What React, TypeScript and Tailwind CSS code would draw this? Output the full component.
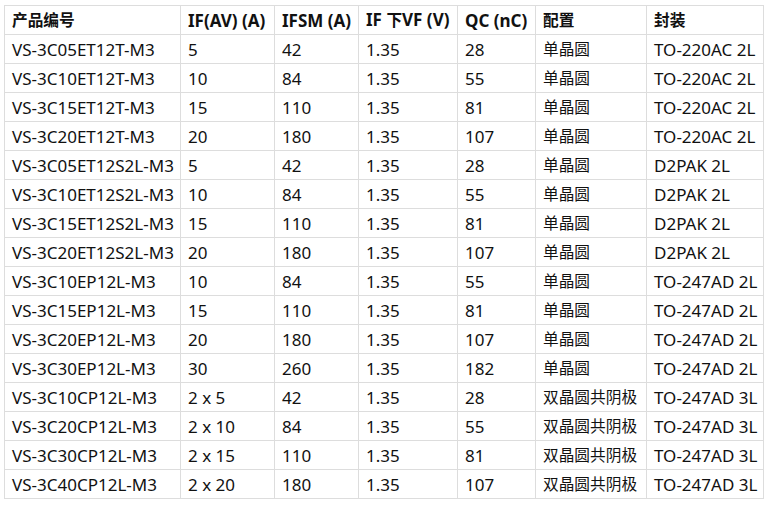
import React from 'react';

const rows: string[][] = [
  ['VS-3C05ET12T-M3', '5', '42', '1.35', '28', '单晶圆', 'TO-220AC 2L'],
  ['VS-3C10ET12T-M3', '10', '84', '1.35', '55', '单晶圆', 'TO-220AC 2L'],
  ['VS-3C15ET12T-M3', '15', '110', '1.35', '81', '单晶圆', 'TO-220AC 2L'],
  ['VS-3C20ET12T-M3', '20', '180', '1.35', '107', '单晶圆', 'TO-220AC 2L'],
  ['VS-3C05ET12S2L-M3', '5', '42', '1.35', '28', '单晶圆', 'D2PAK 2L'],
  ['VS-3C10ET12S2L-M3', '10', '84', '1.35', '55', '单晶圆', 'D2PAK 2L'],
  ['VS-3C15ET12S2L-M3', '15', '110', '1.35', '81', '单晶圆', 'D2PAK 2L'],
  ['VS-3C20ET12S2L-M3', '20', '180', '1.35', '107', '单晶圆', 'D2PAK 2L'],
  ['VS-3C10EP12L-M3', '10', '84', '1.35', '55', '单晶圆', 'TO-247AD 2L'],
  ['VS-3C15EP12L-M3', '15', '110', '1.35', '81', '单晶圆', 'TO-247AD 2L'],
  ['VS-3C20EP12L-M3', '20', '180', '1.35', '107', '单晶圆', 'TO-247AD 2L'],
  ['VS-3C30EP12L-M3', '30', '260', '1.35', '182', '单晶圆', 'TO-247AD 2L'],
  ['VS-3C10CP12L-M3', '2 x 5', '42', '1.35', '28', '双晶圆共阴极', 'TO-247AD 3L'],
  ['VS-3C20CP12L-M3', '2 x 10', '84', '1.35', '55', '双晶圆共阴极', 'TO-247AD 3L'],
  ['VS-3C30CP12L-M3', '2 x 15', '110', '1.35', '81', '双晶圆共阴极', 'TO-247AD 3L'],
  ['VS-3C40CP12L-M3', '2 x 20', '180', '1.35', '107', '双晶圆共阴极', 'TO-247AD 3L'],
];

const headers = ['产品编号', 'IF(AV) (A)', 'IFSM (A)', 'IF 下VF (V)', 'QC (nC)', '配置', '封装'];

// Chinese runs are set a touch smaller than the latin text, as in the source page
const Mixed: React.FC<{ text: string }> = ({ text }) => {
  const parts = text.split(/([\u4e00-\u9fff]+)/).filter(Boolean);
  return (
    <>
      {parts.map((p, i) =>
        /[\u4e00-\u9fff]/.test(p) ? (
          <span key={i} className="text-[15.7px]">
            {p}
          </span>
        ) : (
          <span key={i}>{p}</span>
        )
      )}
    </>
  );
};

const App: React.FC = () => {
  return (
    <div
      className="bg-white pl-[4px] pt-[5px] text-[#111] text-[17px]"
      style={{ fontFamily: '"Noto Sans", "Noto Sans CJK SC", sans-serif' }}
    >
      <table className="border-collapse table-fixed w-[759px]">
        <colgroup>
          <col className="w-[176px]" />
          <col className="w-[94px]" />
          <col className="w-[84px]" />
          <col className="w-[99px]" />
          <col className="w-[78px]" />
          <col className="w-[111px]" />
          <col className="w-[117px]" />
        </colgroup>
        <thead>
          <tr className="h-[29px]">
            {headers.map((h) => (
              <th
                key={h}
                className="border border-[#dddddd] px-[7px] py-0 text-left font-bold leading-none whitespace-nowrap"
              >
                <Mixed text={h} />
              </th>
            ))}
          </tr>
        </thead>
        <tbody>
          {rows.map((r) => (
            <tr key={r[0]} className="h-[29px]">
              {r.map((c, i) => (
                <td
                  key={i}
                  className="border border-[#dddddd] px-[7px] py-0 leading-none whitespace-nowrap"
                >
                  <Mixed text={c} />
                </td>
              ))}
            </tr>
          ))}
        </tbody>
      </table>
    </div>
  );
};

export default App;
